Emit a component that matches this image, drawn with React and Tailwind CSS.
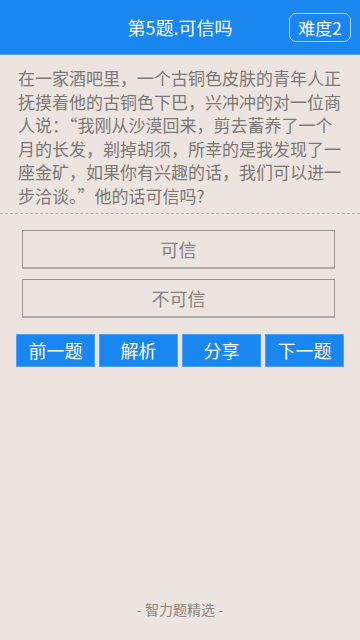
import React from "react";

const QUESTION =
  "在一家酒吧里，一个古铜色皮肤的青年人正抚摸着他的古铜色下巴，兴冲冲的对一位商人说：“我刚从沙漠回来，剪去蓄养了一个月的长发，剃掉胡须，所幸的是我发现了一座金矿，如果你有兴趣的话，我们可以进一步洽谈。”他的话可信吗?";

const FONT = { fontFamily: '"Noto Sans CJK SC", "Noto Sans", sans-serif' };

const App = () => {
  return (
    <div
      className="w-[360px] h-[640px] bg-[#ede4df] flex flex-col overflow-hidden"
      style={FONT}
    >
      {/* header */}
      <div className="h-[55px] bg-[#1a86f0] border-b border-[#4fa3f3] flex items-center relative shrink-0">
        <div className="w-full text-center text-white text-[18px] leading-none">
          第5题.可信吗
        </div>
        <div className="absolute right-[9px] top-[13px] w-[62px] h-[29px] rounded-[7px] border border-[#b9d9fb] flex items-center justify-center text-white text-[17px] leading-none">
          难度2
        </div>
      </div>

      {/* question */}
      <div className="px-[18px] pt-[11px] pb-[6px] text-[17px] leading-[23.5px] text-[#7c7875] break-all">
        {QUESTION}
      </div>
      <div className="border-t border-dashed border-[#b8b2ae]" />

      {/* options */}
      <div className="pl-[22px] pr-[25px] pt-[16px] flex flex-col gap-[10px]">
        <div className="h-[39px] border border-[#9a9693] border-b-2 border-b-[#b0aba7] flex items-center justify-center text-[18px] text-[#86827f]">
          可信
        </div>
        <div className="h-[39px] border border-[#9a9693] border-b-2 border-b-[#b0aba7] flex items-center justify-center text-[18px] text-[#86827f]">
          不可信
        </div>
      </div>

      {/* actions */}
      <div className="px-[16px] pt-[16px] grid grid-cols-4 gap-[4px]">
        {["前一题", "解析", "分享", "下一题"].map((t) => (
          <div
            key={t}
            className="h-[33px] bg-[#1a86f0] border border-[#4aa0f2] flex items-center justify-center text-white text-[18px]"
          >
            {t}
          </div>
        ))}
      </div>

      <div className="flex-1" />
      <div className="pb-[20px] text-center text-[14px] text-[#8a8683]">
        - 智力题精选 -
      </div>
    </div>
  );
};

export default App;
